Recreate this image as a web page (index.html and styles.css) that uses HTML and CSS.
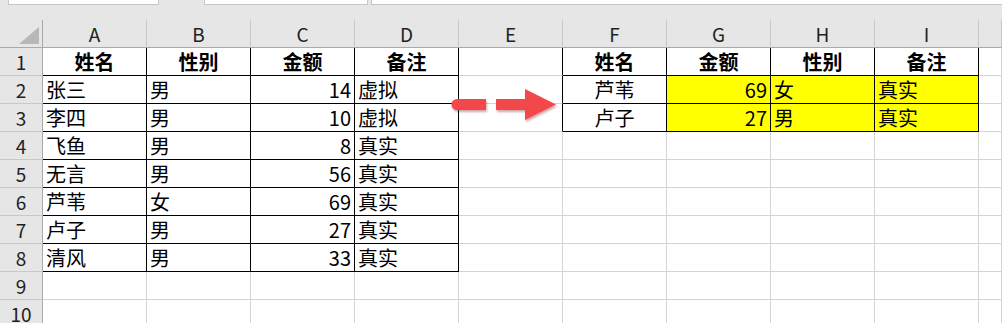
FILE: index.html
```html
<!doctype html>
<html lang="zh-CN">
<head>
    <meta charset="utf-8">
    <title>Sheet1</title>
    <link rel="stylesheet" href="styles.css">
</head>
<body>
    <div id="ribbon">
        <div class="box name-box"></div>
        <div class="box fx-box"></div>
        <div class="box formula-box"></div>
    </div>
    <div id="sheet">
        <!-- column headers -->
        <div class="corner"><span class="tri"></span></div>
        <div class="hd">A</div><div class="hd">B</div><div class="hd">C</div><div class="hd">D</div><div class="hd">E</div>
        <div class="hd">F</div><div class="hd">G</div><div class="hd">H</div><div class="hd">I</div><div class="hd"></div>

        <!-- row 1 -->
        <div class="rh">1</div>
        <div class="c ctr b bk">姓名</div><div class="c ctr b bk">性别</div><div class="c ctr b bk">金额</div><div class="c ctr b bk">备注</div>
        <div class="c bk-r"></div>
        <div class="c ctr b bk">姓名</div><div class="c ctr b bk">金额</div><div class="c ctr b bk">性别</div><div class="c ctr b bk">备注</div>
        <div class="c"></div>

        <!-- row 2 -->
        <div class="rh">2</div>
        <div class="c bk">张三</div><div class="c bk">男</div><div class="c num bk">14</div><div class="c bk">虚拟</div>
        <div class="c bk-r"></div>
        <div class="c ctr bk">芦苇</div><div class="c num bk hl">69</div><div class="c bk hl">女</div><div class="c bk hl">真实</div>
        <div class="c"></div>

        <!-- row 3 -->
        <div class="rh">3</div>
        <div class="c bk">李四</div><div class="c bk">男</div><div class="c num bk">10</div><div class="c bk">虚拟</div>
        <div class="c bk-r"></div>
        <div class="c ctr bk">卢子</div><div class="c num bk hl">27</div><div class="c bk hl">男</div><div class="c bk hl">真实</div>
        <div class="c"></div>

        <!-- row 4 -->
        <div class="rh">4</div>
        <div class="c bk">飞鱼</div><div class="c bk">男</div><div class="c num bk">8</div><div class="c bk">真实</div>
        <div class="c"></div><div class="c"></div><div class="c"></div><div class="c"></div><div class="c"></div><div class="c"></div>

        <!-- row 5 -->
        <div class="rh">5</div>
        <div class="c bk">无言</div><div class="c bk">男</div><div class="c num bk">56</div><div class="c bk">真实</div>
        <div class="c"></div><div class="c"></div><div class="c"></div><div class="c"></div><div class="c"></div><div class="c"></div>

        <!-- row 6 -->
        <div class="rh">6</div>
        <div class="c bk">芦苇</div><div class="c bk">女</div><div class="c num bk">69</div><div class="c bk">真实</div>
        <div class="c"></div><div class="c"></div><div class="c"></div><div class="c"></div><div class="c"></div><div class="c"></div>

        <!-- row 7 -->
        <div class="rh">7</div>
        <div class="c bk">卢子</div><div class="c bk">男</div><div class="c num bk">27</div><div class="c bk">真实</div>
        <div class="c"></div><div class="c"></div><div class="c"></div><div class="c"></div><div class="c"></div><div class="c"></div>

        <!-- row 8 -->
        <div class="rh">8</div>
        <div class="c bk">清风</div><div class="c bk">男</div><div class="c num bk">33</div><div class="c bk">真实</div>
        <div class="c"></div><div class="c"></div><div class="c"></div><div class="c"></div><div class="c"></div><div class="c"></div>

        <!-- row 9 -->
        <div class="rh">9</div>
        <div class="c"></div><div class="c"></div><div class="c"></div><div class="c"></div><div class="c"></div>
        <div class="c"></div><div class="c"></div><div class="c"></div><div class="c"></div><div class="c"></div>

        <!-- row 10 -->
        <div class="rh">10</div>
        <div class="c"></div><div class="c"></div><div class="c"></div><div class="c"></div><div class="c"></div>
        <div class="c"></div><div class="c"></div><div class="c"></div><div class="c"></div><div class="c"></div>

        <!-- dashed arrow drawn over the grid -->
        <svg class="arrow" width="120" height="50" viewBox="0 0 120 50">
            <defs>
                <filter id="shade" x="-10%" y="-20%" width="130%" height="160%">
                    <feDropShadow dx="1" dy="2" stdDeviation="1.2" flood-color="#7a1010" flood-opacity="0.35"/>
                </filter>
            </defs>
            <g fill="#f2474b" filter="url(#shade)">
                <path d="M12 14 H41 V25 H12 A5.5 5.5 0 0 1 12 14 Z"/>
                <rect x="51" y="14" width="30" height="11"/>
                <polygon points="80,4 111,19.5 80,35"/>
            </g>
        </svg>
    </div>
</body>
</html>
```

FILE: styles.css
```css
body {
    margin: 0;
    width: 1002px;
    height: 323px;
    overflow: hidden;
    background-color: #e6e6e6;
    font-family: "Noto Sans CJK SC", "Noto Sans", sans-serif;
    color: #000;
}
#ribbon {
    display: flex;
    height: 20px;
    padding-left: 8px;
}
.box {
    height: 4px;
    margin-top: -1px;
    background-color: #fff;
    border: 1px solid #c6c6c6;
}
.name-box {
    width: 149px;
    margin-right: 45px;
}
.fx-box {
    width: 162px;
    margin-right: 3px;
}
.formula-box {
    flex: 1;
    border-right: none;
}
#sheet {
    position: relative;
    display: grid;
    grid-template-columns: 43px repeat(9, 104px) 1fr;
    grid-auto-rows: 28px;
    background-color: #fff;
}
.corner {
    background-color: #e6e6e6;
    border-right: 1px solid #a9a9a9;
    border-bottom: 1px solid #a9a9a9;
    position: relative;
}
.tri {
    position: absolute;
    right: 3px;
    bottom: 3px;
    width: 0;
    height: 0;
    border-left: 20px solid transparent;
    border-bottom: 17px solid #b7b7b7;
}
.hd {
    background-color: #e6e6e6;
    border-right: 1px solid #c8c8c8;
    border-bottom: 1px solid #a9a9a9;
    display: flex;
    justify-content: center;
    align-items: flex-end;
    font-size: 19px;
    line-height: 27px;
    color: #222;
}
.rh {
    background-color: #e6e6e6;
    border-right: 1px solid #a9a9a9;
    border-bottom: 1px solid #c8c8c8;
    display: flex;
    justify-content: center;
    align-items: flex-end;
    font-size: 19px;
    line-height: 27px;
    color: #222;
}
.c {
    border-right: 1px solid #d4d4d4;
    border-bottom: 1px solid #d4d4d4;
    padding: 0 3px;
    display: flex;
    align-items: flex-end;
    font-size: 20px;
    line-height: 27px;
    white-space: nowrap;
    overflow: hidden;
}
.ctr {
    justify-content: center;
}
.num {
    justify-content: flex-end;
}
.b {
    font-weight: bold;
}
.bk {
    border-right-color: #000;
    border-bottom-color: #000;
}
.bk-r {
    border-right-color: #000;
}
.hl {
    background-color: #ffff00;
}
.arrow {
    position: absolute;
    left: 445px;
    top: 65px;
}
```
